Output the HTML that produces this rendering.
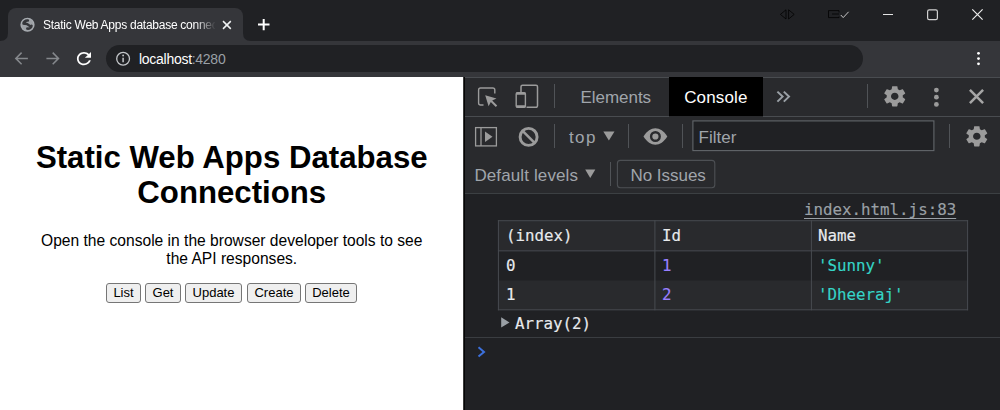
<!DOCTYPE html>
<html><head><meta charset="utf-8">
<style>
*{box-sizing:border-box;margin:0;padding:0}
html,body{width:1000px;height:410px;overflow:hidden;background:#202124;font-family:"Liberation Sans",sans-serif}
.abs{position:absolute}
#tabstrip{left:0;top:0;width:1000px;height:41px;background:#202124}
#tab{left:8px;top:8px;width:235px;height:34px;background:#35363a;border-radius:8px 8px 0 0}
#tabtitle{left:43px;top:18px;font-size:12px;line-height:15px;color:#fff;white-space:nowrap;width:172px;overflow:hidden;letter-spacing:-0.26px;-webkit-mask-image:linear-gradient(to right,#000 152px,transparent 173px)}
#toolbar{left:0;top:41px;width:1000px;height:36px;background:#35363a}
#omni{left:106px;top:45px;width:757px;height:27px;border-radius:14px;background:#202124}
#url{left:139px;top:51px;font-size:14px;line-height:16px;color:#fff;letter-spacing:-0.28px;white-space:nowrap}
#url span{color:#9aa0a6}
#page{left:0;top:77px;width:463px;height:333px;background:#fff}
#split{left:463px;top:77px;width:2px;height:333px;background:linear-gradient(to right,#3a3a3a 1px,#060606 1px)}
h1{position:absolute;left:0;top:140px;width:463.5px;text-align:center;font-size:31.2px;line-height:35px;font-weight:bold;color:#000}
#p{left:0;top:232px;width:463.5px;text-align:center;font-size:15.6px;line-height:17.6px;color:#000}
.btn{position:absolute;top:283px;height:20px;border:1px solid #767676;border-radius:3px;background:#efefef;font-size:13px;color:#000;text-align:center;line-height:18px}
#dev{left:465px;top:77px;width:535px;height:333px;background:#202124}
#dtb{left:465px;top:78px;width:535px;height:115px;background:#292a2d}
.hl{position:absolute;left:465px;width:535px;height:1px;background:#494c50}
.ui{position:absolute;font-size:17px;line-height:20px;color:#a0a5ab;white-space:nowrap}
#ctab{left:669px;top:77px;width:94px;height:39px;background:#000}
#filter{left:693px;top:121px;width:241px;height:30px;border:1px solid #5f6368;background:#202124}
#noiss{left:617px;top:160px;width:98px;height:28px;border:1px solid #4a4d51;border-radius:3px}
.mono{position:absolute;font-family:"DejaVu Sans Mono","Liberation Mono",monospace;font-size:15.8px;line-height:20px;color:#e8eaed;white-space:nowrap;-webkit-text-stroke:0.15px}
.cell{position:absolute;border:1px solid #3c4043}
</style></head><body>
<div id="tabstrip" class="abs"></div>
<div id="tab" class="abs"></div>
<div id="tabtitle" class="abs">Static Web Apps database connections</div>
<div id="toolbar" class="abs"></div>
<div id="omni" class="abs"></div>
<div id="url" class="abs">localhost<span>:4280</span></div>
<div id="page" class="abs"></div>
<div id="split" class="abs"></div>
<h1>Static Web Apps Database Connections</h1>
<div id="p" class="abs">Open the console in the browser developer tools to see<br>the API responses.</div>
<div class="btn" style="left:106px;width:35px">List</div>
<div class="btn" style="left:145px;width:36px">Get</div>
<div class="btn" style="left:185px;width:57px">Update</div>
<div class="btn" style="left:247px;width:54px">Create</div>
<div class="btn" style="left:305px;width:52px">Delete</div>

<div id="dev" class="abs"></div>
<div id="dtb" class="abs"></div>
<div class="hl" style="top:77px"></div>
<div id="ctab" class="abs"></div>
<div class="hl" style="top:116px;width:204px"></div>
<div class="hl" style="top:116px;left:763px;width:237px"></div>
<div class="hl" style="top:193px;background:#3c4043"></div>
<div class="ui" style="left:580.5px;top:88px;letter-spacing:-0.04px">Elements</div>
<div class="ui" style="left:684.2px;top:88px;letter-spacing:0.13px;color:#fff">Console</div>
<div class="ui" style="left:569px;top:128px;letter-spacing:1.35px">top</div>
<svg class="abs" style="left:0;top:0" width="1000" height="410" viewBox="0 0 1000 410"><rect x="692.9" y="120.9" width="241" height="29.7" fill="#202124" stroke="#63676c" stroke-width="1.1"/><rect x="617.4" y="160.4" width="97.4" height="27.4" rx="3" fill="none" stroke="#4d5054" stroke-width="1.1"/></svg>
<div class="ui" style="left:698.5px;top:128px;letter-spacing:0.04px">Filter</div>
<div class="ui" style="left:474.4px;top:166px;letter-spacing:0.12px">Default levels</div>

<div class="ui" style="left:630.4px;top:166px;letter-spacing:-0.02px">No Issues</div>

<!-- console table -->
<div class="mono" style="left:804px;top:200px;color:#9aa0a6;text-decoration:underline;text-underline-offset:3px;text-decoration-thickness:1.4px">index.html.js:83</div>
<svg class="abs" style="left:0;top:0" width="1000" height="410" viewBox="0 0 1000 410">
<rect x="498.4" y="220.7" width="469.2" height="30.1" fill="#292a2d"/>
<rect x="498.4" y="280.5" width="469.2" height="29.3" fill="#292a2d"/>
<g fill="#484b50">
<rect x="497.9" y="220.2" width="470.2" height="1"/>
<rect x="497.9" y="250.35" width="470.2" height="1"/>
<rect x="497.9" y="309.3" width="470.2" height="1"/>
<rect x="497.9" y="220.2" width="1" height="90.1"/>
<rect x="654.4" y="220.2" width="1" height="90.1"/>
<rect x="810.9" y="220.2" width="1" height="90.1"/>
<rect x="967.1" y="220.2" width="1" height="90.1"/>
</g>
</svg>
<div class="mono" style="left:506px;top:226px">(index)</div>
<div class="mono" style="left:662px;top:226px">Id</div>
<div class="mono" style="left:818px;top:226px">Name</div>
<div class="mono" style="left:506px;top:256px">0</div>
<div class="mono" style="left:662px;top:256px;color:#9980ff">1</div>
<div class="mono" style="left:818px;top:256px;color:#35d4c7">'Sunny'</div>
<div class="mono" style="left:506px;top:285px">1</div>
<div class="mono" style="left:662px;top:285px;color:#9980ff">2</div>
<div class="mono" style="left:818px;top:285px;color:#35d4c7">'Dheeraj'</div>
<div class="mono" style="left:515px;top:314px">Array(2)</div>
<div class="hl" style="top:337px;background:#3a3d41"></div>

<svg class="abs" style="left:0;top:0" width="1000" height="410" viewBox="0 0 1000 410" fill="none">
<!-- tab flares -->
<path d="M0 41 Q8 41 8 33 L8 41 Z" fill="#35363a"/>
<path d="M251 41 Q243 41 243 33 L243 41 Z" fill="#35363a"/>
<!-- globe favicon -->
<circle cx="27.5" cy="24.75" r="7.1" fill="#a9adb2"/>
<circle cx="27.5" cy="24.75" r="5.9" fill="#9da1a6"/>
<path d="M27.9 20.6 C25.2 20.3 23.3 22.2 23.5 23.5 C25.4 24 27 23.5 28.6 25.1 C29.8 26.3 31 26.2 31.5 25.8 C31.3 27.6 29.4 28.9 27.3 28.6" stroke="#35363a" stroke-width="2.5" stroke-linecap="round" stroke-linejoin="round"/>
<path d="M24 22 L26.5 21 L26 23.5 Z" fill="#35363a"/>
<!-- tab close -->
<path d="M223 21.1 L230.8 28.9 M230.8 21.1 L223 28.9" stroke="#f1f3f4" stroke-width="1.5"/>
<!-- new tab plus -->
<path d="M258 24.6 H269.5 M263.7 18.9 V30.3" stroke="#fff" stroke-width="2"/>
<!-- window controls -->
<path d="M786 9.8 L780.4 14.4 L786 19 Z M788.6 9.8 L794.2 14.4 L788.6 19 Z" stroke="#000" stroke-width="0.9" opacity="0.85"/>
<path d="M839 12.5 V10.6 H828.5 V17.6 H839 V16.5 M832 14 H839" stroke="#000" stroke-width="0.9" opacity="0.85"/>
<path d="M840.8 15 L843.2 17.6 L848.6 11.8" stroke="#c8c8c8" stroke-width="1"/>
<rect x="883" y="14" width="10" height="1" fill="#e4e4e4"/>
<rect x="927.6" y="9.8" width="9.8" height="9.8" rx="1.6" stroke="#d0d0d0" stroke-width="1.2"/>
<path d="M972.3 9.4 L982.6 19.7 M982.6 9.4 L972.3 19.7" stroke="#ececec" stroke-width="1.2"/>
<!-- nav -->
<path d="M27.9 58.4 H16.4 M21.6 52.6 L15.8 58.4 L21.6 64.2" stroke="#85888c" stroke-width="1.5"/>
<path d="M46.4 58.4 H57.9 M52.7 52.6 L58.5 58.4 L52.7 64.2" stroke="#85888c" stroke-width="1.5"/>
<g transform="translate(73.4,48.8) scale(0.88,0.82)"><path d="M17.65 6.35C16.2 4.9 14.21 4 12 4c-4.42 0-7.990 3.580-7.990 8s3.570 8 7.990 8c3.730 0 6.840-2.550 7.730-6h-2.080c-.820 2.330-3.040 4-5.650 4-3.310 0-6-2.690-6-6s2.690-6 6-6c1.660 0 3.140.690 4.220 1.780L13 11h7V4l-2.350 2.350z" fill="#fff"/></g>
<circle cx="123.1" cy="58.7" r="6.4" stroke="#c4c7ca" stroke-width="1.3"/>
<path d="M123.1 57.7 V62.2" stroke="#c4c7ca" stroke-width="1.5"/><circle cx="123.1" cy="55.5" r="0.9" fill="#c4c7ca"/>
<circle cx="978.5" cy="53.3" r="1.4" fill="#fff"/><circle cx="978.5" cy="58.6" r="1.4" fill="#fff"/><circle cx="978.5" cy="63.8" r="1.4" fill="#fff"/>
<!-- devtools row1 -->
<g stroke="#9b9b9b" fill="none">
<path d="M494.8 93.5 V90 a2 2 0 0 0 -2 -2 H480.6 a2 2 0 0 0 -2 2 V103 a2 2 0 0 0 2 2 H483.5" stroke-width="1.4"/>
<path d="M521 92 V86.7 a1.5 1.5 0 0 1 1.5 -1.5 H536 a1.5 1.5 0 0 1 1.5 1.5 V105.8 a1.5 1.5 0 0 1 -1.5 1.5 H526.5" stroke-width="1.5"/>
<rect x="516.2" y="92.7" width="9.2" height="14.6" rx="1.3" stroke-width="1.4"/>
<path d="M516.2 93.6 H525.4 M516.2 106.4 H525.4" stroke-width="2.2"/>
<path d="M777.4 91.6 L782.6 96.6 L777.4 101.6 M783.8 91.6 L789 96.6 L783.8 101.6" stroke="#9aa0a6" stroke-width="2"/>
<path d="M969.9 89.9 L983.1 103.1 M983.1 89.9 L969.9 103.1" stroke="#a6a6a6" stroke-width="2.5"/>
<!-- row2 -->
<rect x="475.6" y="127.6" width="20.8" height="18.3" stroke-width="1.3"/>
<path d="M481 127.6 V145.9" stroke-width="1.3"/>
<circle cx="528.6" cy="136.9" r="8.5" stroke-width="2.9"/>
<path d="M522.6 130.9 L534.6 142.9" stroke-width="2.6"/>
</g>
<g fill="#9b9b9b">
<path d="M485.2 95.2 L496.5 98.6 L492.2 100.6 L497.2 105.6 L495.8 107 L490.8 102 L488.6 106.2 Z"/>
<path d="M485 131.5 L492.5 136.8 L485 142 Z"/>
<path d="M603.3 131.4 H614.5 L608.9 140.5 Z"/>
<path d="M643.5 136.5 C647 131 651 128.3 655.4 128.3 C659.8 128.3 663.8 131 667.3 136.5 C663.8 142 659.8 144.7 655.4 144.7 C651 144.7 647 142 643.5 136.5 Z"/>
<path d="M585.2 169.6 H595.3 L590.25 178 Z"/>
<circle cx="936.4" cy="90.1" r="2.4"/><circle cx="936.4" cy="97.2" r="2.4"/><circle cx="936.4" cy="104.4" r="2.4"/>
<g transform="translate(894.75,96.35) scale(1.12,1.055) translate(-12,-12)"><path fill-rule="evenodd" d="M19.14 12.94c.04-.3.060-.61.060-.94 0-.32-.020-.64-.070-.94l2.030-1.580c.18-.14.23-.41.12-.61l-1.920-3.320c-.12-.22-.37-.29-.59-.22l-2.390.96c-.5-.38-1.030-.7-1.620-.94l-.36-2.540c-.04-.24-.24-.41-.48-.41h-3.840c-.24 0-.43.17-.47.41l-.36 2.540c-.59.24-1.130.57-1.620.94l-2.390-.96c-.22-.08-.47 0-.59.22L2.740 8.870c-.12.21-.08.47.12.61l2.030 1.580c-.05.3-.09.63-.09.94s.02.64.07.94l-2.030 1.580c-.18.14-.23.41-.12.61l1.920 3.320c.12.22.37.29.59.22l2.390-.96c.5.38 1.030.7 1.620.94l.36 2.540c.05.24.24.41.48.41h3.840c.24 0 .44-.17.47-.41l.36-2.540c.59-.24 1.130-.56 1.620-.94l2.390.96c.22.08.47 0 .59-.22l1.920-3.320c.12-.22.070-.47-.12-.61l-2.010-1.580zM12 15.35c-1.85 0-3.35-1.5-3.35-3.35s1.5-3.35 3.35-3.35 3.35 1.5 3.35 3.35-1.5 3.35-3.35 3.35z"/></g>
<g transform="translate(976.8,136.3) scale(1.12,1.055) translate(-12,-12)"><path fill-rule="evenodd" d="M19.14 12.94c.04-.3.060-.61.060-.94 0-.32-.020-.64-.070-.94l2.030-1.580c.18-.14.23-.41.12-.61l-1.920-3.320c-.12-.22-.37-.29-.59-.22l-2.390.96c-.5-.38-1.030-.7-1.620-.94l-.36-2.540c-.04-.24-.24-.41-.48-.41h-3.840c-.24 0-.43.17-.47.41l-.36 2.540c-.59.24-1.130.57-1.620.94l-2.390-.96c-.22-.08-.47 0-.59.22L2.740 8.870c-.12.21-.08.47.12.61l2.030 1.580c-.05.3-.09.63-.09.94s.02.64.07.94l-2.030 1.580c-.18.14-.23.41-.12.61l1.920 3.320c.12.22.37.29.59.22l2.390-.96c.5.38 1.030.7 1.620.94l.36 2.540c.05.24.24.41.48.41h3.840c.24 0 .44-.17.47-.41l.36-2.540c.59-.24 1.130-.56 1.620-.94l2.390.96c.22.08.47 0 .59-.22l1.920-3.320c.12-.22.070-.47-.12-.61l-2.010-1.580zM12 15.35c-1.85 0-3.35-1.5-3.35-3.35s1.5-3.35 3.35-3.35 3.35 1.5 3.35 3.35-1.5 3.35-3.35 3.35z"/></g>
</g>
<circle cx="655.4" cy="136.5" r="4.3" stroke="#292a2d" stroke-width="2.4"/>
<!-- separators -->
<g fill="#505357">
<rect x="554" y="84" width="1" height="24"/><rect x="867" y="84" width="1" height="24"/>
<rect x="554" y="124" width="1" height="24"/><rect x="628" y="124" width="1" height="24"/><rect x="682" y="124" width="1" height="24"/><rect x="949" y="124" width="1" height="24"/>
<rect x="610" y="162" width="1" height="24"/>
</g>
<!-- console -->
<path d="M501.2 317.3 L509.5 322.5 L501.2 327.6 Z" fill="#9aa0a6"/>
<path d="M478.5 347.3 L484 351.9 L478.5 356.5" stroke="#3c70dc" stroke-width="2"/>
</svg>
</body></html>
